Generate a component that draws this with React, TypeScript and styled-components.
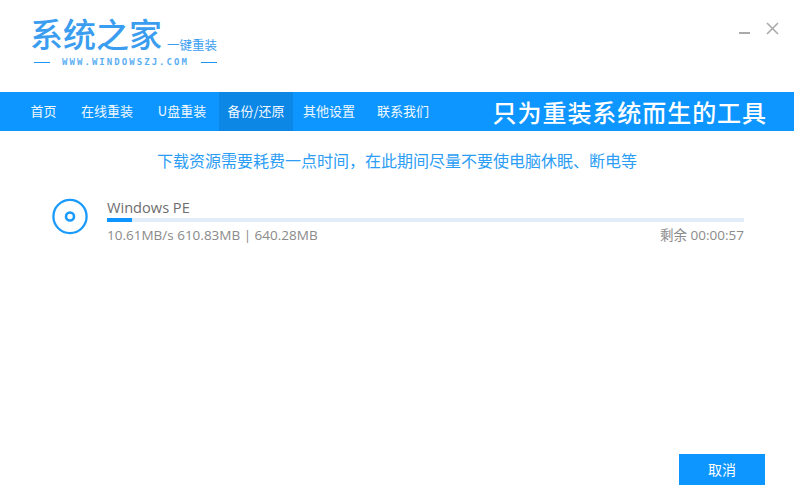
import React from "react";
import styled, { createGlobalStyle } from "styled-components";

const Global = createGlobalStyle`
  html, body { margin: 0; padding: 0; background: #fff; }
  body { font-family: "Noto Sans", "Noto Sans CJK SC", sans-serif; }
`;

const Page = styled.div`
  width: 794px;
  height: 504px;
  display: flex;
  flex-direction: column;
  overflow: hidden;
  background: #fff;
`;

const Header = styled.header`
  height: 92px;
  display: flex;
  justify-content: space-between;
  padding: 15px 15px 0 32px;
  box-sizing: border-box;
`;

const Logo = styled.div`
  width: 185px;
  display: flex;
  flex-direction: column;
`;

const LogoTop = styled.div`
  display: flex;
  align-items: flex-end;
  height: 36px;
`;

const LogoName = styled.span`
  font: 500 33px/36px "Noto Sans CJK SC", sans-serif;
  margin-left: -2px;
  color: #3a9df0;
  white-space: nowrap;
`;

const LogoTag = styled.span`
  font: 400 12.5px/14px "Noto Sans CJK SC", sans-serif;
  color: #3a9df0;
  margin: 0 0 -1px 5px;
  white-space: nowrap;
`;

const LogoSub = styled.div`
  display: flex;
  align-items: center;
  justify-content: space-between;
  margin-top: 5px;
  padding-left: 2px;
`;

const Rule = styled.span`
  width: 16px;
  height: 1px;
  background: #1e96f5;
`;

const LogoUrl = styled.span`
  font: 700 9px/12px "DejaVu Sans Mono", monospace;
  letter-spacing: 2.05px;
  color: #5aaef2;
  white-space: nowrap;
`;

const WindowControls = styled.div`
  display: flex;
  align-items: flex-start;
  gap: 15px;
  padding-top: 6px;
`;

const Nav = styled.nav`
  height: 39px;
  background: #0d96ff;
  display: flex;
  align-items: stretch;
  padding: 0 27px 0 18px;
  color: #fff;
`;

const NavItem = styled.a<{ $active?: boolean; $w: number }>`
  display: flex;
  align-items: center;
  justify-content: center;
  width: ${(p) => p.$w}px;
  padding-bottom: 1px;
  box-sizing: border-box;
  font: 400 13px/38px "Noto Sans CJK SC", sans-serif;
  color: #f0f8ff;
  background: ${(p) => (p.$active ? "#0c87e6" : "transparent")};
  white-space: nowrap;
`;

const Slogan = styled.div`
  margin-left: auto;
  font: 500 24px/39px "Noto Sans CJK SC", sans-serif;
  letter-spacing: 0.95px;
  color: #fff;
  white-space: nowrap;
`;

const Main = styled.main`
  flex: 1;
  display: flex;
  flex-direction: column;
  padding: 0 29px 19px 50px;
`;

const Notice = styled.p`
  margin: 18px 0 0 -21px;
  text-align: center;
  font: 400 16px/22px "Noto Sans CJK SC", sans-serif;
  color: #2c9df5;
`;

const Task = styled.section`
  display: flex;
  align-items: flex-start;
  gap: 16px;
  margin: 25px 21px 0 0;
`;

const Info = styled.div`
  flex: 1;
  display: flex;
  flex-direction: column;
  margin-top: 1px;
`;

const TaskName = styled.div`
  font: 400 14.6px/20px "Open Sans", "Noto Sans CJK SC", sans-serif;
  margin-bottom: 1px;
  color: #6e6e6e;
`;

const Track = styled.div`
  height: 4px;
  background: #e3edf9;
`;

const Fill = styled.div`
  height: 100%;
  background: #0d96ff;
`;

const Stats = styled.div`
  display: flex;
  justify-content: space-between;
  margin-top: 4px;
  font: 400 13.5px/18px "Open Sans", "Noto Sans CJK SC", sans-serif;
  color: #8a8a8a;
`;

const Footer = styled.div`
  margin-top: auto;
  display: flex;
  justify-content: flex-end;
`;

const CancelButton = styled.button`
  width: 86px;
  height: 31px;
  border: 0;
  padding: 0;
  background: #0d96ff;
  color: #fff;
  font: 400 14px/31px "Noto Sans CJK SC", sans-serif;
`;

const navItems = [
  { label: "首页", w: 51 },
  { label: "在线重装", w: 76 },
  { label: "U盘重装", w: 74 },
  { label: "备份/还原", w: 74, active: true },
  { label: "其他设置", w: 72 },
  { label: "联系我们", w: 76 },
];

export default function App() {
  const progress = 25 / 637;
  return (
    <Page>
      <Global />
      <Header>
        <Logo>
          <LogoTop>
            <LogoName>系统之家</LogoName>
            <LogoTag>一键重装</LogoTag>
          </LogoTop>
          <LogoSub>
            <Rule />
            <LogoUrl>WWW.WINDOWSZJ.COM</LogoUrl>
            <Rule />
          </LogoSub>
        </Logo>
        <WindowControls>
          <svg width="13" height="14" viewBox="0 0 13 14">
            <rect x="1" y="11" width="11" height="2" fill="#aaa" />
          </svg>
          <svg width="13" height="14" viewBox="0 0 13 14">
            <path d="M1 2L12 13M12 2L1 13" stroke="#aaa" strokeWidth="1.6" fill="none" />
          </svg>
        </WindowControls>
      </Header>
      <Nav>
        {navItems.map((n) => (
          <NavItem key={n.label} $w={n.w} $active={n.active}>
            {n.label}
          </NavItem>
        ))}
        <Slogan>只为重装系统而生的工具</Slogan>
      </Nav>
      <Main>
        <Notice>下载资源需要耗费一点时间，在此期间尽量不要使电脑休眠、断电等</Notice>
        <Task>
          <svg width="41" height="41" viewBox="0 0 41 41" style={{ flexShrink: 0 }}>
            <circle cx="20" cy="20.5" r="16.6" fill="none" stroke="#1a9bfc" strokeWidth="2.3" />
            <circle cx="20" cy="20.5" r="4" fill="none" stroke="#1a9bfc" strokeWidth="2.6" />
          </svg>
          <Info>
            <TaskName>Windows PE</TaskName>
            <Track>
              <Fill style={{ width: `${progress * 100}%` }} />
            </Track>
            <Stats>
              <span>10.61MB/s 610.83MB | 640.28MB</span>
              <span>剩余 00:00:57</span>
            </Stats>
          </Info>
        </Task>
        <Footer>
          <CancelButton>取消</CancelButton>
        </Footer>
      </Main>
    </Page>
  );
}
